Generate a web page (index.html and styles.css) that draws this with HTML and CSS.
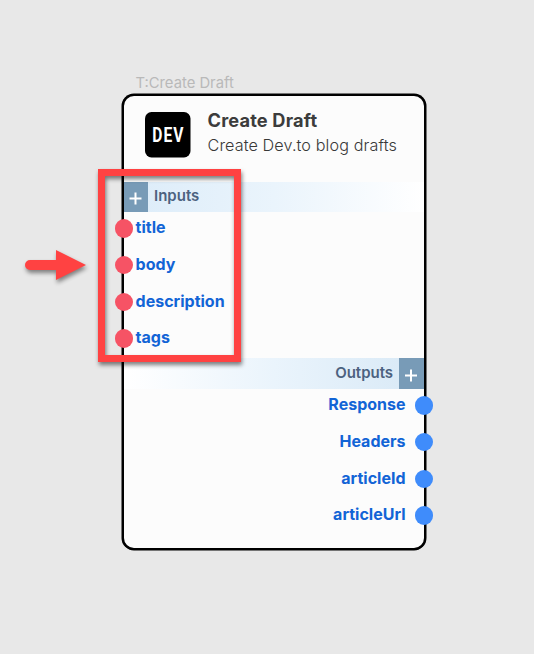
FILE: index.html
```html
<!DOCTYPE html>
<html lang="en">
<head>
<meta charset="utf-8">
<title>Create Draft</title>
<link rel="stylesheet" href="styles.css">
</head>
<body>
<main class="canvas">
  <div class="node-label">T:Create Draft</div>
  <section class="node">
    <header class="node-header">
      <svg class="logo" viewBox="0 0 46 46" role="img" aria-label="DEV">
        <rect width="45.5" height="45.5" rx="6.5"/>
        <g transform="translate(7.3 30.4) scale(.8 1)"><text textLength="39" lengthAdjust="spacing">DEV</text></g>
      </svg>
      <div class="heading">
        <h1>Create Draft</h1>
        <p>Create Dev.to blog drafts</p>
      </div>
    </header>
    <div class="bar bar-in">
      <button class="add" aria-label="Add input"><svg viewBox="0 0 24 30"><path d="M11.5 10.5v12M5.5 16.5h12"/></svg></button>
      <span>Inputs</span>
    </div>
    <ul class="ports inputs">
      <li><i></i><span>title</span></li>
      <li><i></i><span>body</span></li>
      <li><i></i><span>description</span></li>
      <li><i></i><span>tags</span></li>
    </ul>
    <div class="bar bar-out">
      <span>Outputs</span>
      <button class="add" aria-label="Add output"><svg viewBox="0 0 24 30"><path d="M12 10.5v12M6 16.5h12"/></svg></button>
    </div>
    <ul class="ports outputs">
      <li><span>Response</span><i></i></li>
      <li><span>Headers</span><i></i></li>
      <li><span>articleId</span><i></i></li>
      <li><span>articleUrl</span><i></i></li>
    </ul>
  </section>
  <div class="highlight"></div>
  <svg class="arrow" viewBox="0 0 61 30"><path d="M5 10H31V0L61 15 31 30V20H5A5 5 0 0 1 5 10Z"/></svg>
</main>
</body>
</html>
```
FILE: styles.css
```css
* { box-sizing: border-box; }
body { margin: 0; font-family: Inter, sans-serif; }
.canvas { position: relative; width: 534px; height: 654px; background: #e8e8e8; overflow: hidden; }
.node-label { position: absolute; left: 135.5px; top: 73px; font-size: 14.8px; line-height: 20px; color: #b9b9b9; white-space: nowrap; }
.node {
  position: absolute; left: 121.5px; top: 94.4px; width: 304.4px; height: 455.2px;
  border: 2px solid #000; border-radius: 12px; background: #fcfcfc;
  box-shadow: 0 0 0 .5px #000;
}
.node-header { display: flex; height: 85.2px; padding: 15.6px 0 0 21px; }
.logo { width: 46px; height: 46px; flex: none; }
.logo text { fill: #fff; font: 700 19.5px Roboto, sans-serif; }
.heading { padding-left: 17px; white-space: nowrap; }
h1 { margin: -4px 0 0; font-size: 18.2px; font-weight: 650; letter-spacing: .18px; line-height: 24px; color: #3c3c3c; }
p { margin: 1px 0 0; font-size: 16.2px; font-weight: 350; letter-spacing: .1px; line-height: 24px; color: #383838; }
.bar { display: flex; height: 30.5px; align-items: stretch; font-size: 15px; font-weight: 600; line-height: 28px; color: #4c6280; }
.bar-in { background: linear-gradient(90deg, #dcecf9, #eaf4fc 50%, #fff); }
.bar-out { justify-content: flex-end; margin-top: 148.2px; line-height: 29px; background: linear-gradient(270deg, #d8e9f6, #eaf4fc 50%, #fff); }
.bar-in span { padding-left: 6px; }
.bar-out span { padding-right: 6.3px; }
.add { width: 24.5px; padding: 0; border: 0; background: #789bb7; }
.add svg { display: block; width: 24px; height: 30px; fill: none; stroke: #fff; stroke-width: 2; }
.ports { margin: 0; padding: 0; list-style: none; font-size: 16px; font-weight: 650; color: #1264d6; }
.ports li { display: flex; align-items: center; height: 36.7px; }
.ports i { width: 18.4px; height: 18.4px; border-radius: 50%; flex: none; }
.ports span { line-height: 20px; margin-top: -2.4px; }
.inputs { height: 0; margin-top: -2px; }
.inputs i { margin-left: -8.9px; margin-right: 2.6px; background: #f65365; }
.outputs { margin-top: -1.7px; }
.outputs li { justify-content: flex-end; }
.outputs i { margin-right: -9.5px; margin-left: 9.5px; background: #3f8cfb; }
.highlight { position: absolute; left: 98px; top: 169px; width: 143px; height: 193px; border: 7px solid #ff4242; filter: drop-shadow(1px 3px 2px rgba(0,0,0,.5)); }
.arrow { position: absolute; left: 25px; top: 250px; width: 61px; height: 30px; overflow: visible; fill: #ff4242; filter: drop-shadow(1px 3px 2px rgba(0,0,0,.45)); }
```
